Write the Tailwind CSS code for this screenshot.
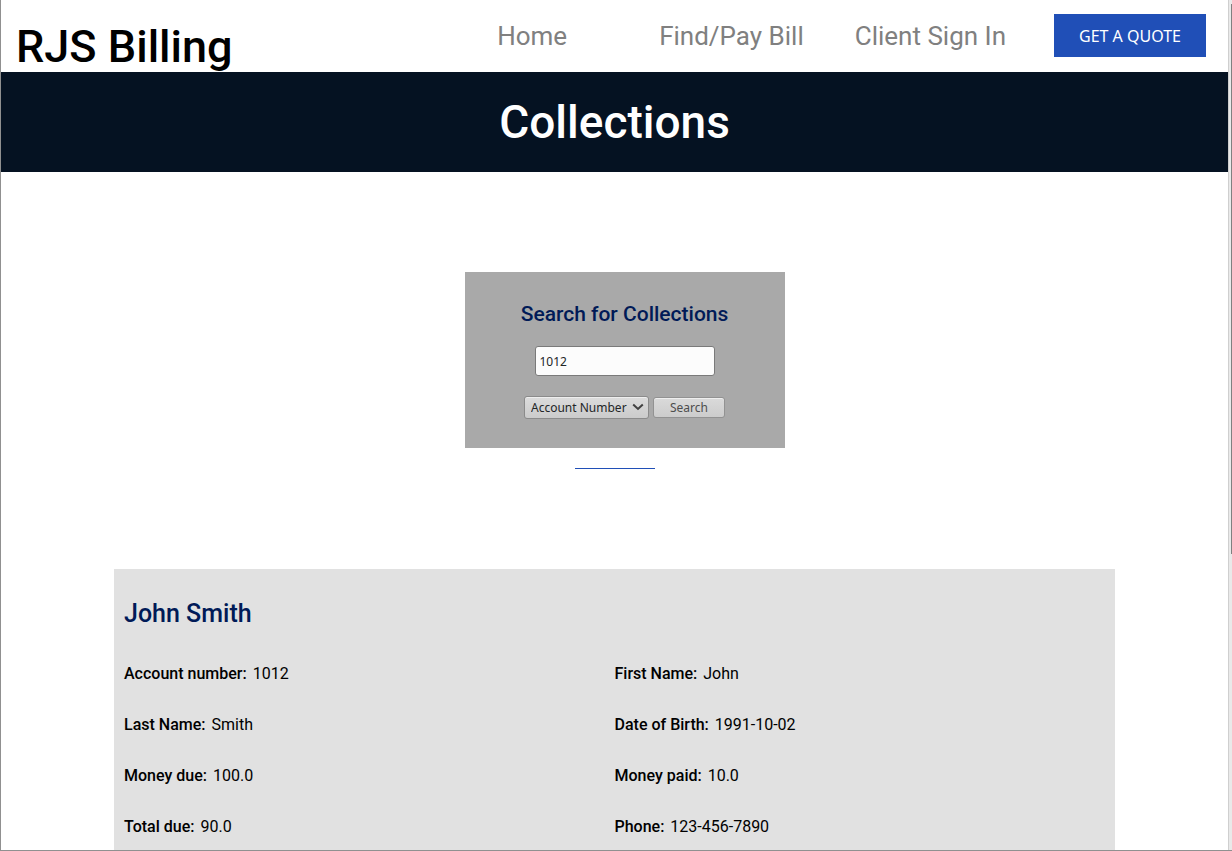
<!DOCTYPE html>
<html lang="en">
<head>
<meta charset="utf-8">
<meta name="viewport" content="width=device-width, initial-scale=1">
<title>RJS Billing - Collections</title>
<script src="https://cdn.jsdelivr.net/npm/@tailwindcss/browser@4"></script>
</head>
<body class="flex h-screen overflow-hidden border-b border-l border-[#909090] bg-white font-['Roboto',sans-serif] text-black">
  <div class="min-w-0 flex-1 overflow-hidden">
    <header class="flex h-[72px] items-start justify-between pr-[22px] pl-[15px]">
      <a href="#" class="pt-5 text-[45px] leading-[54px] font-medium">RJS Billing</a>
      <nav class="flex items-end pt-[14px] text-[26px] leading-[41px] text-[#808080]">
        <a href="#" class="mr-[92px]">Home</a>
        <a href="#" class="mr-[51px]">Find/Pay Bill</a>
        <a href="#" class="mr-12">Client Sign In</a>
        <button type="button" class="h-[43px] w-[152px] bg-[#204fb7] font-['Noto_Sans',sans-serif] text-base text-white">GET A QUOTE</button>
      </nav>
    </header>
    <main>
      <h1 class="flex h-[100px] items-center justify-center bg-[#051222] text-[46px] font-medium text-white">Collections</h1>
      <section class="flex flex-col items-center pt-[100px]">
        <form class="ml-5 flex h-[176px] w-80 flex-col items-center bg-[#a9a9a9] pt-7 font-['Noto_Sans',sans-serif] text-xs text-[#232627]">
          <h2 class="font-['Roboto',sans-serif] text-[21px] leading-7 font-medium text-[#001a57]">Search for Collections</h2>
          <input type="text" value="1012" aria-label="Search term" class="mt-[18px] h-[30px] w-[180px] rounded-[3px] border border-[#7a7a7a] bg-[#fcfcfc] px-1">
          <div class="mt-5 flex items-center gap-1">
            <div class="relative">
              <select aria-label="Search by" class="block h-[23px] w-[125px] appearance-none rounded-[3px] border border-[#8b8b8b] bg-linear-to-b from-[#dcdcdc] to-[#cbcbcb] pl-1.5 shadow-[inset_0_1px_0_#eeeeee]">
                <option>Account Number</option>
                <option>Last Name</option>
              </select>
              <svg class="pointer-events-none absolute top-[7px] right-[5px] h-2 w-3" viewBox="0 0 12 8" fill="none" stroke="#404040" stroke-width="2"><path d="M1.2 1.5L6 6L10.8 1.5"/></svg>
            </div>
            <button type="submit" class="h-[21px] w-[72px] rounded-[3px] border border-[#929292] bg-linear-to-b from-[#dadada] to-[#cccccc] text-[#4d4d4d] shadow-[inset_0_1px_0_#eeeeee]">Search</button>
          </div>
        </form>
        <hr class="mt-5 w-20 border-[#204fb7]">
      </section>
      <section class="mx-[113px] mt-[100px] bg-[#e1e1e1] px-2.5 pt-7 pb-10">
        <h2 class="text-[25px] leading-[34px] font-medium text-[#001a57]">John Smith</h2>
        <div class="mt-[31px] grid grid-cols-2 gap-y-[27px] text-base">
          <p><strong class="mr-0.5 font-medium">Account number:</strong> 1012</p>
          <p><strong class="mr-0.5 font-medium">First Name:</strong> John</p>
          <p><strong class="mr-0.5 font-medium">Last Name:</strong> Smith</p>
          <p><strong class="mr-0.5 font-medium">Date of Birth:</strong> 1991-10-02</p>
          <p><strong class="mr-0.5 font-medium">Money due:</strong> 100.0</p>
          <p><strong class="mr-0.5 font-medium">Money paid:</strong> 10.0</p>
          <p><strong class="mr-0.5 font-medium">Total due:</strong> 90.0</p>
          <p><strong class="mr-0.5 font-medium">Phone:</strong> 123-456-7890</p>
        </div>
      </section>
    </main>
  </div>
  <!-- scroll track with its thumb -->
  <div class="flex w-1 justify-end border-l border-[#cfcfcf] bg-[#e9e9e9] pt-1">
    <div class="h-[65%] w-px bg-[#808080]"></div>
  </div>
</body>
</html>
